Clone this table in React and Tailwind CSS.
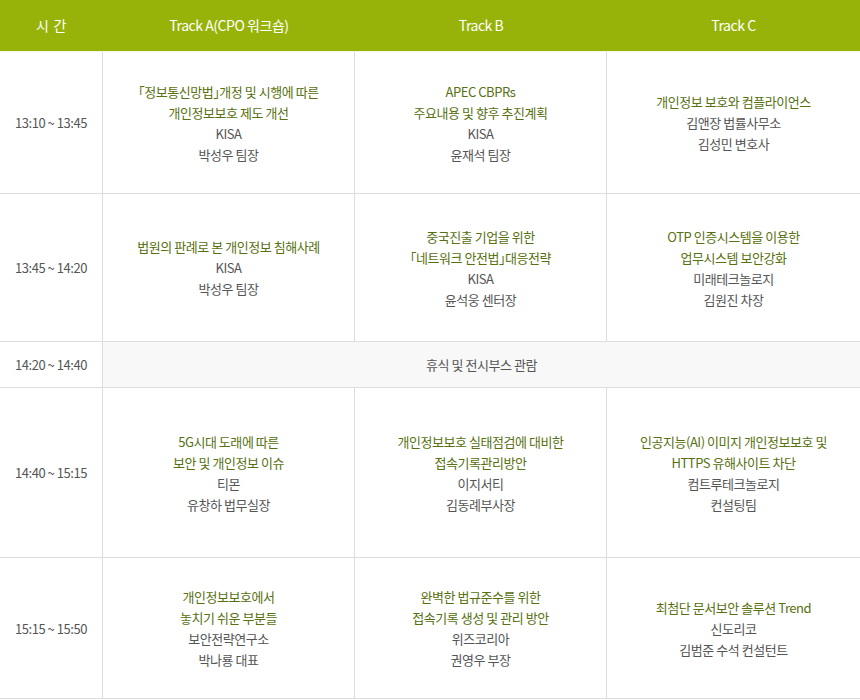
import React from 'react';

const rows = [
  {
    time: '13:10 ~ 13:45',
    h: 'h-[142px]',
    cells: [
      { title: ['「정보통신망법」개정 및 시행에 따른', '개인정보보호 제도 개선'], info: ['KISA', '박성우 팀장'] },
      { title: ['APEC CBPRs', '주요내용 및 향후 추진계획'], info: ['KISA', '윤재석 팀장'] },
      { title: ['개인정보 보호와 컴플라이언스'], info: ['김앤장 법률사무소', '김성민 변호사'] },
    ],
  },
  {
    time: '13:45 ~ 14:20',
    h: 'h-[148px]',
    cells: [
      { title: ['법원의 판례로 본 개인정보 침해사례'], info: ['KISA', '박성우 팀장'] },
      { title: ['중국진출 기업을 위한', '「네트워크 안전법」대응전략'], info: ['KISA', '윤석웅 센터장'] },
      { title: ['OTP 인증시스템을 이용한', '업무시스템 보안강화'], info: ['미래테크놀로지', '김원진 차장'] },
    ],
  },
  { time: '14:20 ~ 14:40', h: 'h-[46px]', rest: '휴식 및 전시부스 관람' },
  {
    time: '14:40 ~ 15:15',
    h: 'h-[170px]',
    cells: [
      { title: ['5G시대 도래에 따른', '보안 및 개인정보 이슈'], info: ['티몬', '유창하 법무실장'] },
      { title: ['개인정보보호 실태점검에 대비한', '접속기록관리방안'], info: ['이지서티', '김동례부사장'] },
      { title: ['인공지능(AI) 이미지 개인정보보호 및', 'HTTPS 유해사이트 차단'], info: ['컴트루테크놀로지', '컨설팅팀'] },
    ],
  },
  {
    time: '15:15 ~ 15:50',
    h: 'h-[141px]',
    cells: [
      { title: ['개인정보보호에서', '놓치기 쉬운 부분들'], info: ['보안전략연구소', '박나룡 대표'] },
      { title: ['완벽한 법규준수를 위한', '접속기록 생성 및 관리 방안'], info: ['위즈코리아', '권영우 부장'] },
      { title: ['최첨단 문서보안 솔루션 Trend'], info: ['신도리코', '김범준 수석 컨설턴트'] },
    ],
  },
];

const widths = ['w-[252px]', 'w-[252px]', 'w-[253px]'];

export default function App() {
  return (
    <div
      className="w-[860px] h-[700px] bg-white text-[13px] leading-[21px] tracking-[-0.035em] overflow-hidden"
      style={{ fontFamily: '"Noto Sans CJK KR", "Noto Sans", sans-serif' }}
    >
      {/* header */}
      <div className="flex h-[52px] bg-[#97b30a] text-white text-[14px] border-b border-[#f7f6e4]">
        <div className="w-[103px] flex items-center justify-center tracking-[0.05em]">시 간</div>
        <div className="w-[252px] flex items-center justify-center">Track A(CPO 워크숍)</div>
        <div className="w-[252px] flex items-center justify-center">Track B</div>
        <div className="w-[253px] flex items-center justify-center">Track C</div>
      </div>

      {rows.map((row) => (
        <div key={row.time} className={`flex border-b border-[#dddddd] ${row.h}`}>
          <div className="w-[103px] shrink-0 flex items-center justify-center border-r border-[#dddddd] text-[#555]">
            {row.time}
          </div>
          {row.rest ? (
            <div className="flex-1 flex items-center justify-center bg-[#f8f8f8] text-[#555]">{row.rest}</div>
          ) : (
            row.cells.map((c, i) => (
              <div
                key={i}
                className={`${widths[i]} shrink-0 flex flex-col items-center justify-center text-center ${i < 2 ? 'border-r border-[#dddddd]' : ''}`}
              >
                {c.title.map((t) => (
                  <div key={t} className="text-[#587010] [font-feature-settings:'halt']">{t}</div>
                ))}
                {c.info.map((t) => (
                  <div key={t} className="text-[#555]">{t}</div>
                ))}
              </div>
            ))
          )}
        </div>
      ))}
    </div>
  );
}
